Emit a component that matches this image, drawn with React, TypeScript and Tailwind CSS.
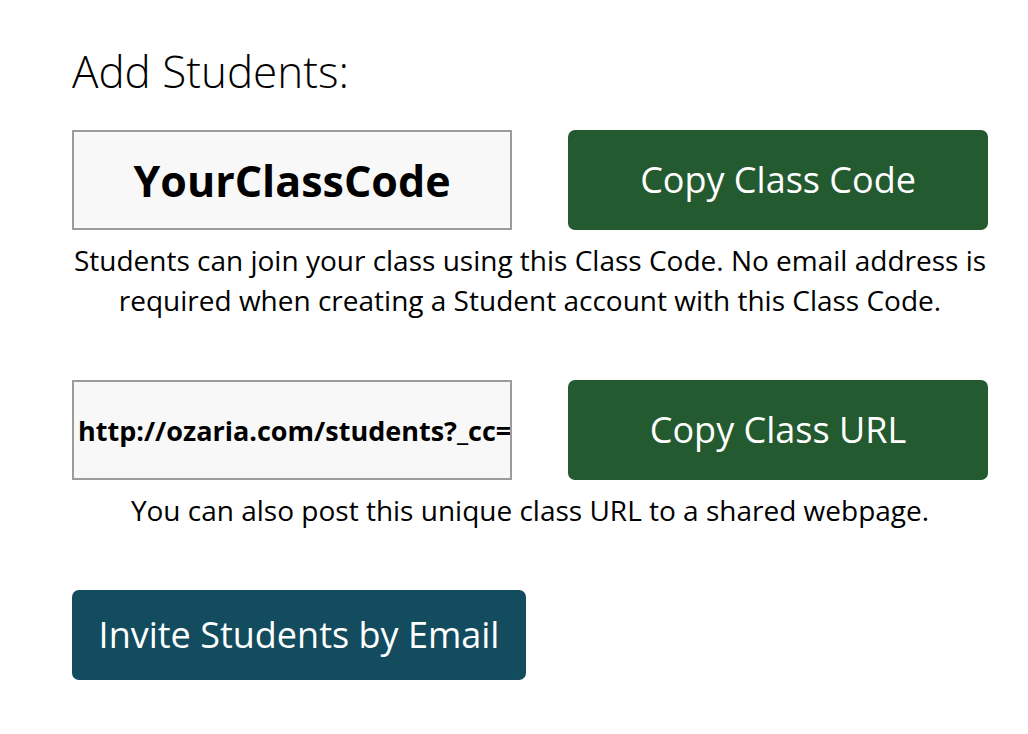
import React from "react";

export default function App() {
  return (
    <div className="min-h-[734px] w-[1028px] bg-white text-black" style={{ fontFamily: '"Open Sans", "Noto Sans", sans-serif' }}>
      <div className="pl-[72px] pt-[43px] w-[988px]">
        <h1 className="text-[44px] font-light leading-[57px] m-0">Add Students:</h1>
        <div className="mt-[30px] flex gap-[56px]">
          <div className="w-[440px] h-[100px] border-2 border-[#9b9b9b] bg-[#f8f8f8] flex items-center justify-center">
            <span className="text-[43px] font-bold leading-none">YourClassCode</span>
          </div>
          <button className="w-[420px] h-[100px] rounded-[7px] bg-[#245a30] text-white text-[36px] leading-none">Copy Class Code</button>
        </div>
        <p className="mt-[10px] text-center text-[28px] leading-[40px] whitespace-nowrap">
          Students can join your class using this Class Code. No email address is
          <br />
          required when creating a Student account with this Class Code.
        </p>
        <div className="mt-[60px] flex gap-[56px]">
          <div className="w-[440px] h-[100px] border-2 border-[#9b9b9b] bg-[#f8f8f8] flex items-center overflow-hidden pl-[4px]">
            <span className="text-[27px] font-bold whitespace-nowrap leading-none">http://ozaria.com/students?_cc=</span>
          </div>
          <button className="w-[420px] h-[100px] rounded-[7px] bg-[#245a30] text-white text-[36px] leading-none">Copy Class URL</button>
        </div>
        <p className="mt-[10px] text-center text-[28px] leading-[40px]">You can also post this unique class URL to a shared webpage.</p>
        <button className="mt-[60px] w-[454px] h-[90px] rounded-[7px] bg-[#134c5e] text-white text-[36px] leading-none">Invite Students by Email</button>
      </div>
    </div>
  );
}
